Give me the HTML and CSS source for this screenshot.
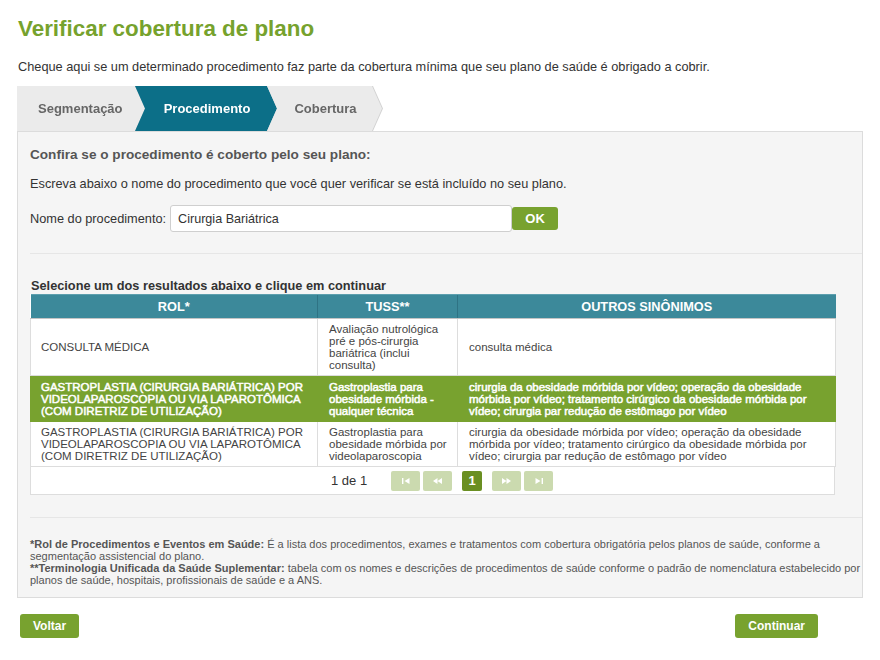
FILE: index.html
```html
<!DOCTYPE html>
<html lang="pt-BR">
<head>
<meta charset="utf-8">
<title>Verificar cobertura de plano</title>
<link rel="stylesheet" href="styles.css">
</head>
<body>
<div class="page">
  <h1 class="title">Verificar cobertura de plano</h1>
  <p class="intro">Cheque aqui se um determinado procedimento faz parte da cobertura mínima que seu plano de saúde é obrigado a cobrir.</p>

  <div class="steps">
    <div class="step step-first">Segmentação</div>
    <div class="step step-active">Procedimento</div>
    <div class="step step-last">Cobertura</div>
  </div>

  <div class="panel">
    <h2 class="panel-heading">Confira se o procedimento é coberto pelo seu plano:</h2>
    <p class="panel-desc">Escreva abaixo o nome do procedimento que você quer verificar se está incluído no seu plano.</p>
    <div class="search-row">
      <label class="search-label" for="proc">Nome do procedimento:</label>
      <input class="search-input" id="proc" type="text" value="Cirurgia Bariátrica">
      <button class="btn btn-ok" type="button">OK</button>
    </div>
    <hr class="sep">

    <div class="results-title">Selecione um dos resultados abaixo e clique em continuar</div>
    <table class="results">
      <thead>
        <tr>
          <th class="col-rol">ROL*</th>
          <th class="col-tuss">TUSS**</th>
          <th class="col-outros">OUTROS SINÔNIMOS</th>
        </tr>
      </thead>
      <tbody>
        <tr class="row-tall">
          <td>CONSULTA MÉDICA</td>
          <td>Avaliação nutrológica pré e pós-cirurgia bariátrica (inclui consulta)</td>
          <td>consulta médica</td>
        </tr>
        <tr class="row-selected">
          <td>GASTROPLASTIA (CIRURGIA BARIÁTRICA) POR VIDEOLAPAROSCOPIA OU VIA LAPAROTÔMICA (COM DIRETRIZ DE UTILIZAÇÃO)</td>
          <td>Gastroplastia para obesidade mórbida - qualquer técnica</td>
          <td>cirurgia da obesidade mórbida por vídeo; operação da obesidade mórbida por vídeo; tratamento cirúrgico da obesidade mórbida por vídeo; cirurgia par redução de estômago por vídeo</td>
        </tr>
        <tr>
          <td>GASTROPLASTIA (CIRURGIA BARIÁTRICA) POR VIDEOLAPAROSCOPIA OU VIA LAPAROTÔMICA (COM DIRETRIZ DE UTILIZAÇÃO)</td>
          <td>Gastroplastia para obesidade mórbida por videolaparoscopia</td>
          <td>cirurgia da obesidade mórbida por vídeo; operação da obesidade mórbida por vídeo; tratamento cirúrgico da obesidade mórbida por vídeo; cirurgia par redução de estômago por vídeo</td>
        </tr>
      </tbody>
    </table>
    <div class="pager">
      <span class="pager-info">1 de 1</span>
      <div class="pager-buttons">
        <span class="pg-btn pg-disabled"><svg width="8" height="6" viewBox="0 0 8 6"><rect x="0" y="0" width="1.4" height="6" fill="#fff"/><path d="M7.5 0 L2.5 3 L7.5 6Z" fill="#fff"/></svg></span>
        <span class="pg-btn pg-disabled"><svg width="9" height="6" viewBox="0 0 9 6"><path d="M4.5 0 L0 3 L4.5 6Z M9 0 L4.5 3 L9 6Z" fill="#fff"/></svg></span>
        <span class="pg-btn pg-current">1</span>
        <span class="pg-btn pg-disabled"><svg width="9" height="6" viewBox="0 0 9 6"><path d="M0 0 L4.5 3 L0 6Z M4.5 0 L9 3 L4.5 6Z" fill="#fff"/></svg></span>
        <span class="pg-btn pg-disabled"><svg width="8" height="6" viewBox="0 0 8 6"><path d="M0.5 0 L5.5 3 L0.5 6Z" fill="#fff"/><rect x="6.6" y="0" width="1.4" height="6" fill="#fff"/></svg></span>
      </div>
    </div>
    <hr class="sep sep-notes">

    <div class="notes">
      <p><b>*Rol de Procedimentos e Eventos em Saúde:</b><span> É a lista dos procedimentos, exames e tratamentos com cobertura obrigatória pelos planos de saúde, conforme a</span><br><span>segmentação assistencial do plano.</span></p>
      <p><b>**Terminologia Unificada da Saúde Suplementar:</b><span> tabela com os nomes e descrições de procedimentos de saúde conforme o padrão de nomenclatura estabelecido por</span><br><span>planos de saúde, hospitais, profissionais de saúde e a ANS.</span></p>
    </div>
  </div>

  <div class="actions">
    <button class="btn btn-action" type="button">Voltar</button>
    <button class="btn btn-action" type="button">Continuar</button>
  </div>
</div>
</body>
</html>
```

FILE: styles.css
```css
* { box-sizing: border-box; }

body {
  margin: 0;
  background: #fff;
  color: #333;
  font-family: "Liberation Sans", Arial, sans-serif;
}

.page {
  padding: 0 17px;
}

.title {
  margin: 0;
  padding: 16px 0 0 1px;
  font-size: 22.4px;
  line-height: 26px;
  font-weight: bold;
  color: #76a22d;
}

.intro {
  margin: 17px 0 0 1px;
  font-size: 12.75px;
  line-height: 16px;
  color: #333;
}

/* Step bar */
.steps {
  display: flex;
  height: 45px;
  margin-top: 11px;
  filter: drop-shadow(1px 0 0 #d2d2d2);
}

.step {
  display: flex;
  align-items: center;
  justify-content: center;
  height: 45px;
  padding: 0 10px;
  margin-left: -10px;
  font-size: 13px;
  font-weight: bold;
  color: #666;
  background: #ebebeb;
  clip-path: polygon(0 0, calc(100% - 10px) 0, 100% 50%, calc(100% - 10px) 100%, 0 100%, 10px 50%);
}

.step-first {
  width: 128px;
  margin-left: 0;
  padding-left: 21px;
  justify-content: flex-start;
  clip-path: polygon(0 0, calc(100% - 10px) 0, 100% 50%, calc(100% - 10px) 100%, 0 100%);
}

.step-active {
  width: 142px;
  padding-left: 12px;
  background: #0c6f88;
  color: #fff;
}

.step-last {
  width: 115px;
  padding-left: 12px;
}

/* Panel */
.panel {
  border: 1px solid #dcdcdc;
  background: #f5f5f5;
  padding: 0 0 11px 12px;
}

.panel-heading {
  margin: 14px 0 0;
  font-size: 13.6px;
  line-height: 18px;
  font-weight: bold;
  color: #555;
}

.panel-desc {
  margin: 12px 0 0;
  font-size: 12.75px;
  line-height: 16px;
  color: #333;
}

.search-row {
  display: flex;
  align-items: center;
  margin-top: 13px;
  height: 27px;
}

.search-label {
  font-size: 12.75px;
  color: #333;
  margin-right: 4px;
}

.search-input {
  width: 342px;
  height: 27px;
  border: 1px solid #cfcfcf;
  border-radius: 3px;
  background: #fff;
  padding: 0 7px;
  font-family: inherit;
  font-size: 12.6px;
  color: #333;
  outline: none;
}

.btn {
  border: 0;
  border-radius: 3px;
  background: #78a22f;
  color: #fff;
  font-family: inherit;
  font-weight: bold;
  cursor: pointer;
  padding: 0;
}

.btn-ok {
  width: 46px;
  height: 23px;
  font-size: 13px;
}

.sep {
  border: 0;
  border-top: 1px solid #e6e6e6;
  margin: 21px 0 0;
}

.results-title {
  margin-top: 25px;
  padding-left: 1px;
  font-size: 12.75px;
  line-height: 14px;
  font-weight: bold;
  color: #333;
}

/* Results table */
.results {
  width: 805px;
  margin-top: 1px;
  border-collapse: collapse;
  table-layout: fixed;
  background: #fff;
  font-size: 11.5px;
  line-height: 12px;
  color: #444;
}

.results th {
  height: 24px;
  padding: 0;
  background: #3c899a;
  color: #fff;
  font-size: 12.75px;
  font-weight: bold;
  text-align: center;
  border-top: 1px solid #5d9fae;
  border-bottom: 1px solid #c4c4c4;
  border-left: 1px solid #2f7384;
}

.results th:first-child { border-left: 0; }

.col-rol { width: 287px; }
.col-tuss { width: 140px; }
.col-outros { width: 378px; }

.results td {
  padding: 4px 5px 4px 11px;
  border: 1px solid #dddddd;
  vertical-align: middle;
  text-align: left;
}

.results td:first-child { padding-left: 10px; padding-right: 4px; }

.row-tall td { height: 57px; }

.row-selected td {
  background: #78a22f;
  border-color: #78a22f;
  color: #fff;
  -webkit-text-stroke: 0.5px #fff;
  height: 46px;
}

/* Pager */
.pager {
  display: flex;
  align-items: center;
  width: 805px;
  height: 28px;
  padding-left: 300px;
  background: #fff;
  border: 1px solid #dddddd;
  border-top: 0;
}

.pager-info {
  font-size: 13px;
  color: #333;
  width: 60px;
}

.pager-buttons {
  display: flex;
  gap: 3px;
}

.pg-btn {
  display: flex;
  align-items: center;
  justify-content: center;
  width: 29px;
  height: 20px;
  border-radius: 2px;
}

.pg-disabled { background: #cbdaaf; }

.pg-current {
  width: 20px;
  margin: 0 7px;
  background: #6a8f22;
  color: #fff;
  font-size: 13px;
  font-weight: bold;
}

.sep-notes { margin-top: 22px; }

.notes {
  margin-top: 20px;
  font-size: 11px;
  line-height: 12px;
  color: #555;
}

.notes p { margin: 0; }
.notes b { color: #555; }

/* Actions */
.actions {
  display: flex;
  justify-content: space-between;
  margin-top: 16px;
  padding: 0 45px 0 3px;
}

.btn-action {
  height: 24px;
  font-size: 12px;
  padding: 0 13px;
}
```
